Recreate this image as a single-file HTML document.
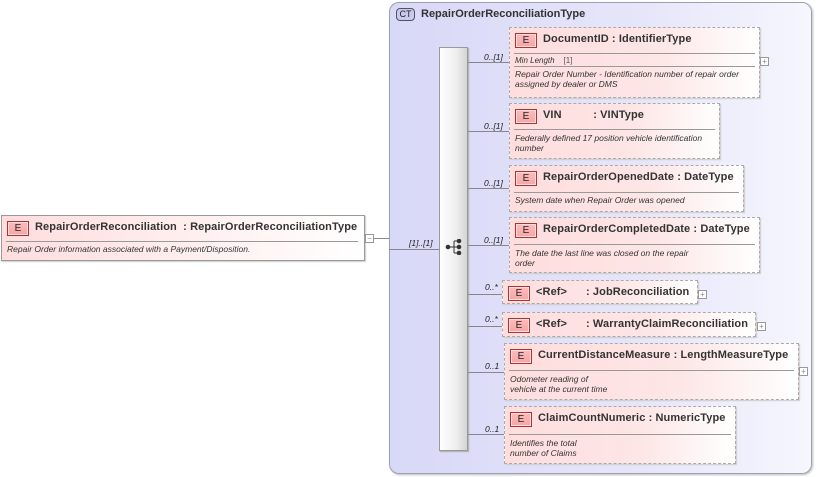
<!DOCTYPE html>
<html><head><style>
*{margin:0;padding:0;box-sizing:border-box}
body{width:816px;height:477px;background:#fff;position:relative;overflow:hidden;font-family:"Liberation Sans",Arial,sans-serif}
.a{position:absolute}
.ct{left:389px;top:2px;width:423px;height:472px;border:1px solid #a0a0b0;border-radius:10px;background:linear-gradient(90deg,#d8d8f8 0%,#e6e6fa 60%,#f6f6fe 100%);box-shadow:1px 1px 2px #bbb}
.ctb{left:396px;top:8px;width:19px;height:13px;border:1px solid #555;border-radius:4px;background:#c8c8f0;font-size:9px;line-height:11px;text-align:center;color:#222}
.seq{left:439px;top:47px;width:29px;height:404px;border:1px solid #999;background:linear-gradient(90deg,#fff,#eee 60%,#d4d4d4);box-shadow:1px 1px 1px #aaa}
.el{border:1px dashed #aaa;background:linear-gradient(90deg,#fdd 0%,#fde6e6 60%,#fff 100%);box-shadow:1px 1px 1px #ccc}
.el.s{border:1px solid #999}
.E{position:absolute;left:5px;top:5px;width:22px;height:15px;border:1px solid #a33;background:linear-gradient(#fbb,#f4a6a6);font-size:10px;line-height:13px;text-align:center;color:#222;box-shadow:inset 0 0 0 1px #fdd}
.h{position:absolute;left:33px;top:5px;font-size:11px;font-weight:bold;color:#333;white-space:pre;line-height:13px;letter-spacing:0.1px}
.ln{position:absolute;left:4px;height:1px;background:#999}
.d{position:absolute;left:5px;font-size:8.5px;font-style:italic;color:#333;line-height:10px;white-space:pre}
.hl{position:absolute;height:1px;background:#888}
.lb{position:absolute;font-size:8.5px;font-style:italic;color:#222}
.pl{position:absolute;width:9px;height:9px;border:1px solid #999;background:#fff;font-size:8px;line-height:7px;text-align:center;color:#888}
</style></head><body>
<div class="a ct"></div>
<div class="a ctb">CT</div>
<div class="a" style="left:421px;top:8px;font-size:11px;font-weight:bold;color:#333">RepairOrderReconciliationType</div>
<div class="a seq"></div>
<svg class="a" style="left:445px;top:239px" width="18" height="16"><g fill="#333" stroke="#333"><circle cx="3" cy="8" r="1.8"/><line x1="3" y1="8" x2="9" y2="8"/><line x1="9" y1="2" x2="9" y2="14"/><line x1="9" y1="2" x2="14" y2="2"/><line x1="9" y1="8" x2="14" y2="8"/><line x1="9" y1="14" x2="14" y2="14"/><circle cx="14" cy="2" r="1.8"/><circle cx="14" cy="8" r="1.8"/><circle cx="14" cy="14" r="1.8"/></g></svg>

<div class="a el s" style="left:1px;top:215px;width:364px;height:46px;background:linear-gradient(90deg,#fdd,#fff)">
<div class="E">E</div><div class="h" style="letter-spacing:0.1px">RepairOrderReconciliation  : RepairOrderReconciliationType</div>
<div class="ln" style="top:25px;width:352px"></div>
<div class="d" style="top:28px">Repair Order information associated with a Payment/Disposition.</div></div>
<div class="pl" style="left:365px;top:234px">−</div>
<div class="hl" style="left:374px;top:238px;width:15px"></div>
<div class="hl" style="left:389px;top:249px;width:50px"></div>
<div class="lb" style="left:409px;top:238px">[1]..[1]</div>

<div class="hl" style="left:468px;top:62px;width:41px"></div><div class="lb" style="left:484px;top:52px">0..[1]</div>
<div class="hl" style="left:468px;top:131px;width:41px"></div><div class="lb" style="left:484px;top:121px">0..[1]</div>
<div class="hl" style="left:468px;top:188px;width:41px"></div><div class="lb" style="left:484px;top:178px">0..[1]</div>
<div class="hl" style="left:468px;top:245px;width:41px"></div><div class="lb" style="left:484px;top:235px">0..[1]</div>
<div class="hl" style="left:468px;top:294px;width:34px"></div><div class="lb" style="left:485px;top:282px">0..*</div>
<div class="hl" style="left:468px;top:326px;width:34px"></div><div class="lb" style="left:485px;top:314px">0..*</div>
<div class="hl" style="left:468px;top:372px;width:36px"></div><div class="lb" style="left:485px;top:361px">0..1</div>
<div class="hl" style="left:468px;top:434px;width:36px"></div><div class="lb" style="left:485px;top:424px">0..1</div>

<div class="a el" style="left:509px;top:27px;width:251px;height:71px">
<div class="E">E</div><div class="h">DocumentID : IdentifierType</div>
<div class="ln" style="top:25px;width:241px"></div>
<div class="d" style="top:28px;font-size:8px">Min Length    <span style="font-style:normal;color:#555">[1]</span></div>
<div class="ln" style="top:38px;width:241px"></div>
<div class="d" style="top:41px">Repair Order Number - Identification number of repair order
assigned by dealer or DMS</div></div>
<div class="pl" style="left:760px;top:57px">+</div>

<div class="a el" style="left:509px;top:103px;width:211px;height:56px">
<div class="E">E</div><div class="h">VIN          : VINType</div>
<div class="ln" style="top:25px;width:201px"></div>
<div class="d" style="top:29px">Federally defined 17 position vehicle identification
number</div></div>

<div class="a el" style="left:509px;top:165px;width:235px;height:47px">
<div class="E">E</div><div class="h">RepairOrderOpenedDate : DateType</div>
<div class="ln" style="top:26px;width:225px"></div>
<div class="d" style="top:29px">System date when Repair Order was opened</div></div>

<div class="a el" style="left:509px;top:217px;width:251px;height:56px">
<div class="E">E</div><div class="h">RepairOrderCompletedDate : DateType</div>
<div class="ln" style="top:26px;width:241px"></div>
<div class="d" style="top:30px">The date the last line was closed on the repair
order</div></div>

<div class="a el" style="left:502px;top:280px;width:196px;height:24px">
<div class="E">E</div><div class="h">&lt;Ref&gt;      : JobReconciliation</div></div>
<div class="pl" style="left:698px;top:290px">+</div>

<div class="a el" style="left:502px;top:312px;width:254px;height:25px">
<div class="E">E</div><div class="h">&lt;Ref&gt;      : WarrantyClaimReconciliation</div></div>
<div class="pl" style="left:757px;top:322px">+</div>

<div class="a el" style="left:504px;top:343px;width:295px;height:57px">
<div class="E">E</div><div class="h">CurrentDistanceMeasure : LengthMeasureType</div>
<div class="ln" style="top:26px;width:285px"></div>
<div class="d" style="top:30px">Odometer reading of
vehicle at the current time</div></div>
<div class="pl" style="left:799px;top:367px">+</div>

<div class="a el" style="left:504px;top:406px;width:232px;height:58px">
<div class="E">E</div><div class="h">ClaimCountNumeric : NumericType</div>
<div class="ln" style="top:27px;width:222px"></div>
<div class="d" style="top:31px">Identifies the total
number of Claims</div></div>
</body></html>
